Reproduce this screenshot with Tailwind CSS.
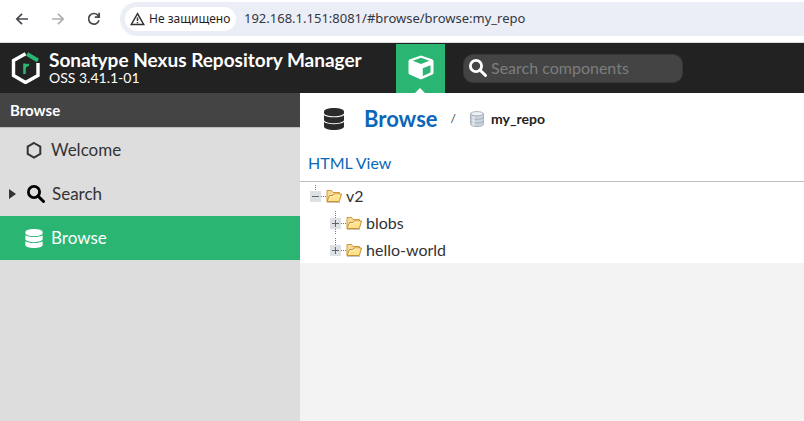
<!DOCTYPE html>
<html lang="en">
<head>
<meta charset="utf-8">
<title>Browse - Nexus Repository Manager</title>
<script src="https://cdn.jsdelivr.net/npm/@tailwindcss/browser@4"></script>
</head>
<body class="flex min-h-screen flex-col bg-[#f3f3f3] font-['Lato',sans-serif] text-[#333]">

<svg class="hidden">
  <symbol id="database" viewBox="0 0 20 22">
    <path d="M10 0C4.500 0 0 1.500 0 3.500v1.500c0 1.900 4.500 3.300 10 3.300s10-1.400 10-3.300V3.500C20 1.500 15.500 0 10 0z"/>
    <path d="M0 7.200v4.800c0 1.900 4.500 3.200 10 3.200s10-1.300 10-3.200v-4.800c-2 1.400-5.500 2.100-10 2.100S2 8.600 0 7.200z"/>
    <path d="M0 14.100v4.300C0 20.400 4.500 22 10 22s10-1.600 10-3.600v-4.300c-2 1.400-5.500 2.100-10 2.100s-8-.7-10-2.100z"/>
  </symbol>
  <symbol id="magnifier" viewBox="0 0 18 18">
    <circle cx="7" cy="7" r="5.600" fill="none" stroke="currentColor" stroke-width="2.800"/>
    <path d="M11 11l5.500 5.500" fill="none" stroke="currentColor" stroke-width="3" stroke-linecap="round"/>
  </symbol>
  <symbol id="folder" viewBox="0 0 16 14">
    <path d="M1 12.500V1.500h4.500l1.500 2h6.500v3" fill="#f6dc9a" stroke="#d3973a"/>
    <path d="M1 12.500l2.500-6H7l1-1.500h7.500l-2.200 7.500z" fill="#ffe28c" stroke="#cd8e2e"/>
    <path d="M3 11.500l1.500-4h3l1-1.500h5.500" fill="none" stroke="#fff3c4"/>
    <path d="M1 13.500h13" stroke="#9a8a72" stroke-opacity=".5"/>
  </symbol>
</svg>

<div class="flex h-[43px] shrink-0 items-start border-b border-[#dadce0] bg-white pt-[2px] text-[#47494d]">
  <div class="flex h-[34px] w-[120px] shrink-0 items-center gap-5 pl-[14px]">
    <button type="button" aria-label="Back" class="size-4">
      <svg class="size-4" viewBox="0 0 16 16" fill="none" stroke="currentColor" stroke-width="1.700"><path d="M14 8H3M8 2.800L2.800 8 8 13.200"/></svg>
    </button>
    <button type="button" aria-label="Forward" class="size-4 text-[#adafb1]" disabled>
      <svg class="size-4" viewBox="0 0 16 16" fill="none" stroke="currentColor" stroke-width="1.700"><path d="M2 8h11M8 2.800L13.200 8 8 13.200"/></svg>
    </button>
    <button type="button" aria-label="Reload" class="size-4">
      <svg class="size-4" viewBox="0 0 16 16" fill="none" stroke="currentColor" stroke-width="1.700"><path d="M13 9.300A5.300 5.300 0 1 1 11.800 4.200L13.200 5.800M13.200 1.800V6.200H8.800"/></svg>
    </button>
  </div>
  <div class="flex h-[34px] min-w-0 flex-1 items-center gap-2 rounded-l-full bg-[#ebeef7] pl-[5px] font-['Noto_Sans',sans-serif]">
    <button type="button" class="flex h-6 w-[111px] shrink-0 items-center gap-1 rounded-full bg-white pl-[5px] text-xs whitespace-nowrap text-[#1f1f1f]">
      <svg class="h-[14px] w-[15px]" viewBox="0 0 15 14" fill="none" stroke="#333" stroke-width="1.500"><path d="M7.500 1.700L13.700 12.500H1.300zM7.500 5.500v3.500M7.500 10v1.300"/></svg>
      Не защищено
    </button>
    <input type="text" aria-label="Address" value="192.168.1.151:8081/#browse/browse:my_repo" class="min-w-0 flex-1 bg-transparent text-[13px] text-[#333640] outline-none">
  </div>
</div>

<header class="flex h-[50px] shrink-0 items-center bg-[#222]">
  <div class="flex w-[396px] shrink-0 items-center gap-2 pl-[11px] text-white">
    <svg class="h-8 w-[30px] shrink-0" viewBox="0 0 30 32" fill="none">
      <path d="M14.500 1.700L2.500 8.500v15l12 7 12.500-7V11" stroke="#fff" stroke-width="3.400"/>
      <path d="M16 2l11 6.500" stroke="#2ab573" stroke-width="4"/>
      <path d="M13.500 11.500V22M13.500 17q.3-4.500 4.500-4" stroke="#2ab573" stroke-width="2.600"/>
    </svg>
    <div class="whitespace-nowrap">
      <div class="text-[19px] leading-5 font-bold">Sonatype Nexus Repository Manager</div>
      <div class="text-sm leading-4">OSS 3.41.1-01</div>
    </div>
  </div>
  <button type="button" aria-label="Browse server contents" class="relative mt-px flex h-[49px] w-[49px] shrink-0 justify-center bg-[#2ab573] pt-[11px]">
    <svg class="h-[25px] w-[26px]" viewBox="0 0 26 25">
      <path d="M13 .5L24 4.200q1.500.5 1.500 2v11.500q0 1.300-1.200 1.900L13 24.500 1.700 19.600Q.5 19 .5 17.700V6.200q0-1.500 1.500-2z" fill="#fff"/>
      <path d="M13 2.800l8.300 3L13 9 4.700 5.800zM14.800 13.300l7.700-3.100v7.200l-7.700 3.500z" fill="#2ab573"/>
    </svg>
    <svg class="absolute bottom-0 left-[19px] h-[5px] w-[10px]" viewBox="0 0 10 5"><path d="M0 5l5-5 5 5z" fill="#fff"/></svg>
  </button>
  <div class="ml-[18px] flex h-[29px] w-[220px] items-center gap-1 rounded-[10px] border border-[#383838] bg-[#444] pl-[5px] text-white">
    <svg class="size-[18px] shrink-0"><use href="#magnifier"/></svg>
    <input type="text" aria-label="Search components" placeholder="Search components" class="min-w-0 flex-1 bg-transparent text-base outline-none placeholder:text-[#7d7d7d]">
  </div>
</header>

<div class="flex flex-1">
  <nav class="w-[300px] shrink-0 bg-[#ddd]">
    <h2 class="flex h-[35px] items-center border-b border-[#bebebe] bg-[#444] pl-[10px] text-[15px] font-bold text-white">Browse</h2>
    <a href="#welcome" class="flex h-11 items-center gap-2 pl-[25px] text-[17px]">
      <svg class="size-[18px]" viewBox="0 0 18 18" fill="none" stroke="#333" stroke-width="2"><path d="M9 2l6.300 3.600v7.300L9 16.500l-6.300-3.600V5.600z"/></svg>
      Welcome
    </a>
    <a href="#search" class="flex h-11 items-center pl-[9px] text-[17px]">
      <svg class="mr-[11px] h-[10px] w-[7px]" viewBox="0 0 7 10"><path d="M0 0l7 5-7 5z" fill="#333"/></svg>
      <svg class="mr-[7px] size-[18px] text-black"><use href="#magnifier"/></svg>
      Search
    </a>
    <a href="#browse" aria-current="page" class="flex h-11 items-center gap-2 bg-[#2ab573] pl-[25px] text-[17px] text-white">
      <svg class="h-[19px] w-[18px] fill-white"><use href="#database"/></svg>
      Browse
    </a>
  </nav>

  <main class="min-w-0 flex-1">
    <div class="border-b border-[#bebebe] bg-white">
      <div class="flex h-[52px] items-center pl-6">
        <svg class="h-[22px] w-5 fill-[#2b2b2b]"><use href="#database"/></svg>
        <a href="#browse" class="ml-5 text-[22px] leading-[50px] font-bold text-[#0c67b8]">Browse</a>
        <span class="ml-[13px] text-xs">/</span>
        <svg class="ml-[14px] h-4 w-[14px]" viewBox="0 0 14 16" stroke="#98a3ae" stroke-width=".8">
          <path d="M.6 2.500v11c0 1.200 2.800 2 6.400 2s6.400-.8 6.400-2v-11z" fill="#cbd4dd"/>
          <ellipse cx="7" cy="2.700" rx="6.400" ry="2.100" fill="#eef2f5"/>
          <path d="M.6 6.300c0 1.200 2.800 2 6.400 2s6.400-.8 6.400-2M.6 10c0 1.200 2.800 2 6.400 2s6.400-.8 6.400-2" fill="none"/>
          <path d="M3.500 6v8.500" stroke="#f4f7fa" stroke-width="2" stroke-opacity=".7"/>
        </svg>
        <span class="ml-[7px] text-sm font-bold text-[#222]">my_repo</span>
      </div>
      <div class="flex h-9 items-center pl-2">
        <a href="#html" class="text-base text-[#0c67b8]">HTML View</a>
      </div>
    </div>
    <ul role="tree" class="bg-white text-base">
      <li role="treeitem" aria-expanded="true">
        <div class="flex h-[27px] items-center pl-[10px]">
          <svg class="h-[27px] w-4" viewBox="0 0 16 27" fill="none"><path d="M5.500 3v6M11 14.500h5" stroke="#777" stroke-dasharray="1 1"/><path d="M0 9h11v11H0z" fill="#dde1e5"/><path d="M2 14.500h7" stroke="#666"/></svg>
          <svg class="h-[14px] w-4"><use href="#folder"/></svg>
          <span class="ml-1">v2</span>
        </div>
        <ul role="group">
          <li role="treeitem" aria-expanded="false" class="flex h-[27px] items-center pl-[30px]">
            <svg class="h-[27px] w-4" viewBox="0 0 16 27" fill="none"><path d="M5.500 2v24M11 14.500h5" stroke="#777" stroke-dasharray="1 1"/><path d="M0 9h11v11H0z" fill="#dde1e5"/><path d="M2 14.500h7M5.500 11v7" stroke="#666"/></svg>
            <svg class="h-[14px] w-4"><use href="#folder"/></svg>
            <span class="ml-1">blobs</span>
          </li>
          <li role="treeitem" aria-expanded="false" class="flex h-[27px] items-center pl-[30px]">
            <svg class="h-[27px] w-4" viewBox="0 0 16 27" fill="none"><path d="M5.500 2v7M11 14.500h5" stroke="#777" stroke-dasharray="1 1"/><path d="M0 9h11v11H0z" fill="#dde1e5"/><path d="M2 14.500h7M5.500 11v7" stroke="#666"/></svg>
            <svg class="h-[14px] w-4"><use href="#folder"/></svg>
            <span class="ml-1">hello-world</span>
          </li>
        </ul>
      </li>
    </ul>
  </main>
</div>
</body>
</html>
